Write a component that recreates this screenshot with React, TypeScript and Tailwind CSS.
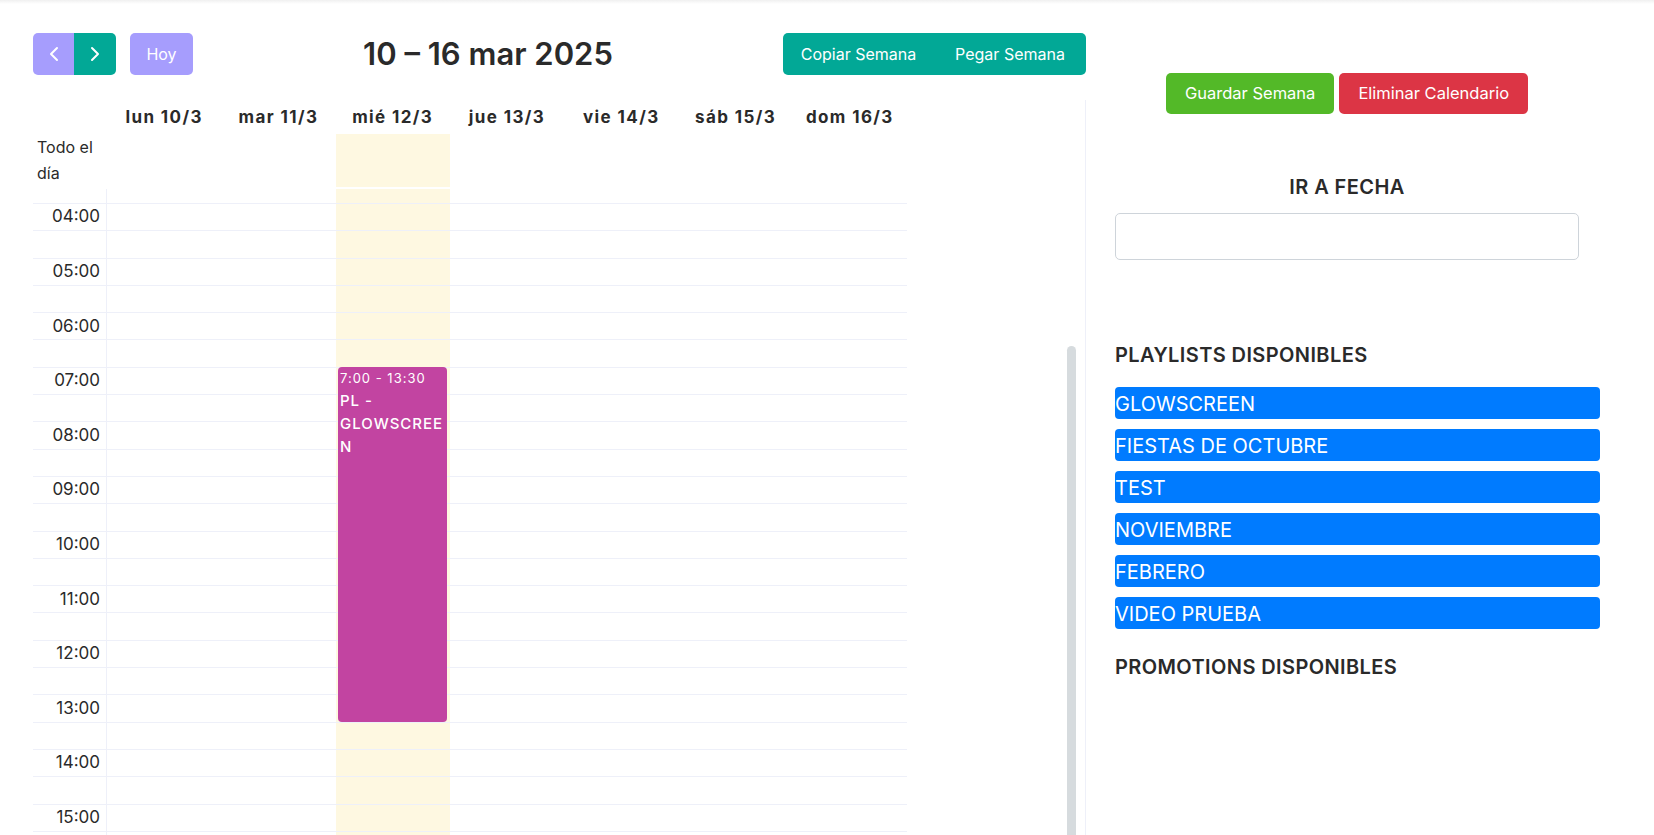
import { ChevronLeft, ChevronRight } from 'lucide-react';

const days = ['lun 10/3', 'mar 11/3', 'mié 12/3', 'jue 13/3', 'vie 14/3', 'sáb 15/3', 'dom 16/3'];
const playlists = ['GLOWSCREEN', 'FIESTAS DE OCTUBRE', 'TEST', 'NOVIEMBRE', 'FEBRERO', 'VIDEO PRUEBA'];
const TODAY = 2;

// slots from 04:00 onwards, half-hour each
const slots = Array.from({ length: 24 }, (_, i) => {
  const h = 4 + Math.floor(i / 2);
  return i % 2 === 0 ? `${String(h).padStart(2, '0')}:00` : '';
});

function DayCells({ height, border }: { height: string; border: boolean }) {
  return (
    <>
      {days.map((d, i) => (
        <div
          key={d}
          className={`flex-1 ${height} ${border ? 'border-t border-[#eef0f9]' : ''} ${i === TODAY ? 'bg-[#fef8e1]' : ''}`}
        />
      ))}
    </>
  );
}

function Calendar() {
  return (
    <div className="w-[874px] text-[#2a2a2a]">
      {/* header */}
      <div className="flex h-[34px] items-center pt-[2px]">
        <div className="w-[74px]" />
        {days.map((d) => (
          <div key={d} className="flex-1 text-center text-[17px] font-bold tracking-[1.4px]">
            {d}
          </div>
        ))}
      </div>

      {/* all day */}
      <div className="flex h-[53px]">
        <div className="w-[74px] pl-[4px] text-[16px] leading-[26px]">Todo el día</div>
        {days.map((d, i) => (
          <div key={d} className={`flex-1 ${i === TODAY ? 'bg-[#fef8e1]' : ''}`} />
        ))}
      </div>
      <div className="h-[2px]" />

      {/* time grid */}
      <div className="relative">
        <div className="flex">
          <div className="h-[14px] w-[74px] border-r border-[#eef0f9]" />
          <DayCells height="h-[14px]" border={false} />
        </div>
        {slots.map((label, idx) => (
          <div key={idx} className="flex">
            <div className="flex h-[27.3px] w-[74px] items-center justify-end border-t border-r border-[#eef0f9] pr-[6px] text-[17px]">
              {label}
            </div>
            <DayCells height="h-[27.3px]" border />
          </div>
        ))}

        {/* event */}
        <div className="absolute left-[305px] top-[178px] h-[355px] w-[109px] rounded-[4px] bg-[#c244a1] px-[2px] pt-[1px] text-white">
          <div className="text-[13px] leading-[20px] tracking-[1px]">7:00 - 13:30</div>
          <div className="mt-[1px] text-[15px] font-medium leading-[23px] tracking-[1px] [overflow-wrap:break-word]">PL - GLOWSCREEN</div>
        </div>
      </div>
    </div>
  );
}

export default function App() {
  return (
    <div className="h-[835px] overflow-hidden bg-white font-['Inter',sans-serif]">
      <div className="h-[4px] bg-gradient-to-b from-[#f0f0f0] to-white" />
      <div className="flex">
        {/* left */}
        <div className="w-[1086px] pl-[33px] pt-[29px]">
          <div className="flex h-[42px] items-center justify-between">
            <div className="flex items-center">
              <button className="flex h-[42px] w-[41px] items-center justify-center rounded-l-[5px] bg-[#a69dfd] text-white">
                <ChevronLeft size={24} strokeWidth={2} />
              </button>
              <button className="flex h-[42px] w-[42px] items-center justify-center rounded-r-[5px] bg-[#02a896] text-white">
                <ChevronRight size={24} strokeWidth={2} />
              </button>
              <button className="ml-[14px] h-[42px] w-[63px] rounded-[5px] bg-[#a69dfd] text-[16px] text-white">Hoy</button>
            </div>
            <h1 className="text-[31px] font-semibold text-[#2a2a2a]">10 – 16 mar 2025</h1>
            <div className="flex h-[42px] overflow-hidden rounded-[5px] bg-[#02a896] text-[16px] text-white">
              <button className="w-[151px]">Copiar Semana</button>
              <button className="w-[152px]">Pegar Semana</button>
            </div>
          </div>

          <div className="mt-[25px] flex h-[740px] border-r border-[#eef0f9]">
            <Calendar />
            <div className="flex flex-1 justify-end pr-[9px] pt-[246px]">
              <div className="h-full w-[9px] rounded-full bg-[#d6dbde]" />
            </div>
          </div>
        </div>

        {/* right */}
        <div className="pl-[29px] pt-[69px] text-[#2a2a2a]">
          <div className="flex w-[464px] justify-center gap-[5px]">
            <button className="h-[41px] rounded-[5px] bg-[#53b928] px-[19px] text-[16.5px] text-white">Guardar Semana</button>
            <button className="h-[41px] rounded-[5px] bg-[#dc3545] px-[19px] text-[16.5px] text-white">Eliminar Calendario</button>
          </div>

          <h2 className="mt-[61px] w-[464px] text-center text-[20px] font-semibold leading-[24px] tracking-[0.4px]">IR A FECHA</h2>
          <input className="mt-[14px] h-[47px] w-[464px] rounded-[5px] border border-[#ced4da] outline-none" />

          <h2 className="mt-[83px] text-[20px] font-semibold leading-[24px] tracking-[0.4px]">PLAYLISTS DISPONIBLES</h2>
          <div className="mt-[20px] flex w-[485px] flex-col gap-[10px]">
            {playlists.map((p) => (
              <div key={p} className="flex h-[32px] items-center rounded-[4px] bg-[#007bff] pt-[1px] text-[20px] text-white">
                {p}
              </div>
            ))}
          </div>

          <h2 className="mt-[26px] text-[20px] font-semibold leading-[24px] tracking-[0.4px]">PROMOTIONS DISPONIBLES</h2>
        </div>
      </div>
    </div>
  );
}
